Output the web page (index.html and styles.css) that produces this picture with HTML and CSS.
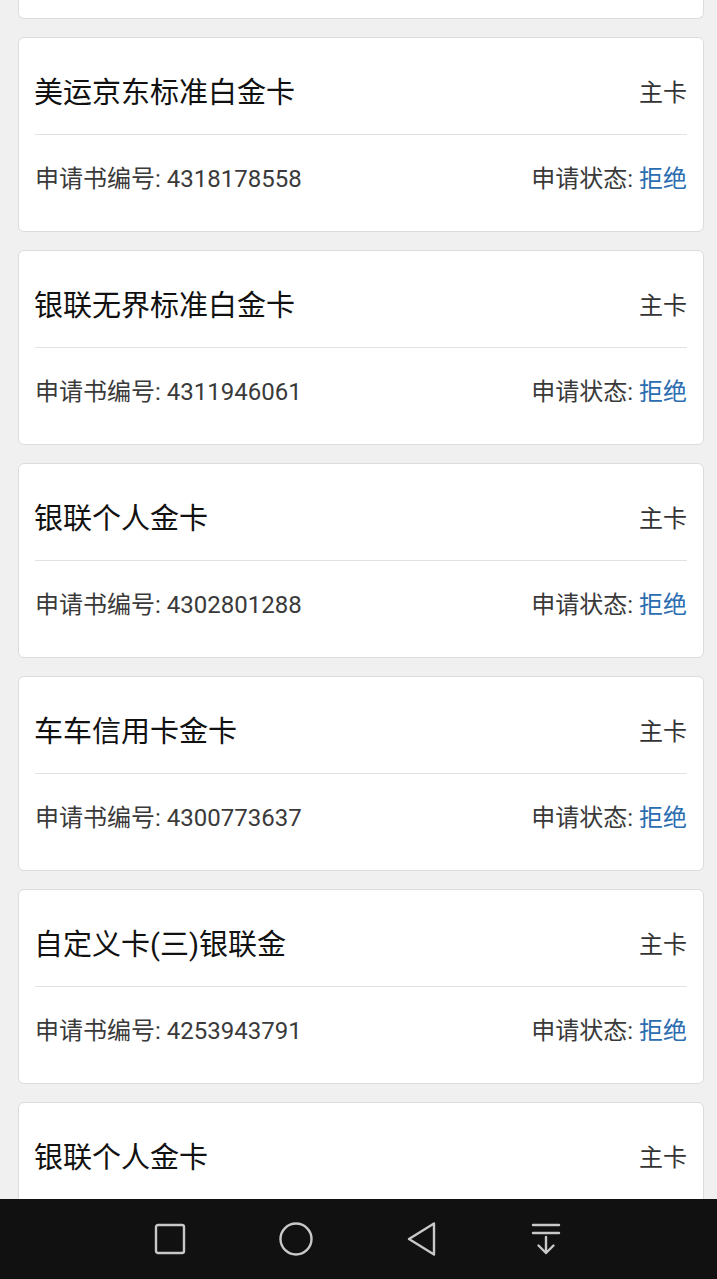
FILE: index.html
```html
<!DOCTYPE html>
<html lang="zh-CN">
<head>
<meta charset="utf-8">
<title>申请记录</title>
<link rel="stylesheet" href="styles.css">
</head>
<body>
<main class="list">
  <section class="card card-tail"></section>
  <section class="card">
    <div class="head"><span class="name">美运京东标准白金卡</span><span class="type">主卡</span></div>
    <div class="info"><span>申请书编号: 4318178558</span><span>申请状态: <em class="status">拒绝</em></span></div>
  </section>
  <section class="card">
    <div class="head"><span class="name">银联无界标准白金卡</span><span class="type">主卡</span></div>
    <div class="info"><span>申请书编号: 4311946061</span><span>申请状态: <em class="status">拒绝</em></span></div>
  </section>
  <section class="card">
    <div class="head"><span class="name">银联个人金卡</span><span class="type">主卡</span></div>
    <div class="info"><span>申请书编号: 4302801288</span><span>申请状态: <em class="status">拒绝</em></span></div>
  </section>
  <section class="card">
    <div class="head"><span class="name">车车信用卡金卡</span><span class="type">主卡</span></div>
    <div class="info"><span>申请书编号: 4300773637</span><span>申请状态: <em class="status">拒绝</em></span></div>
  </section>
  <section class="card">
    <div class="head"><span class="name">自定义卡(三)银联金</span><span class="type">主卡</span></div>
    <div class="info"><span>申请书编号: 4253943791</span><span>申请状态: <em class="status">拒绝</em></span></div>
  </section>
  <section class="card">
    <div class="head"><span class="name">银联个人金卡</span><span class="type">主卡</span></div>
  </section>
</main>
<nav class="navbar">
  <svg class="nav-icon" viewBox="0 0 32 32" width="32" height="32"><rect x="2" y="2" width="28" height="28" rx="2" fill="none" stroke="#c8c8c8" stroke-width="2.4"/></svg>
  <svg class="nav-icon" viewBox="0 0 36 36" width="36" height="36"><circle cx="18" cy="18" r="15.5" fill="none" stroke="#c8c8c8" stroke-width="2.4"/></svg>
  <svg class="nav-icon" viewBox="0 0 32 36" width="32" height="36"><path d="M28 2.5 L3 18 L28 33.5 Z" fill="none" stroke="#c8c8c8" stroke-width="2.4" stroke-linejoin="round"/></svg>
  <svg class="nav-icon" viewBox="0 0 32 34" width="32" height="34"><path d="M3 3 H29 M3 11 H29 M16 15 V31 M8.5 23.5 L16 31 L23.5 23.5" fill="none" stroke="#c8c8c8" stroke-width="2.4" stroke-linecap="round" stroke-linejoin="round"/></svg>
</nav>
</body>
</html>
```
FILE: styles.css
```css
* { box-sizing: border-box; }
html, body {
  margin: 0;
  padding: 0;
  background: #f0f0f0;
  overflow: hidden;
}
body {
  font-family: Roboto, "Noto Sans CJK SC", sans-serif;
  height: 1279px;
}
.list {
  display: flex;
  flex-direction: column;
  gap: 18px;
  padding: 0 13px 0 18px;
}
.card {
  background: #fff;
  border: 1px solid #dcdcdc;
  border-radius: 6px;
  padding: 0 16px;
  height: 195px;
}
.card-tail {
  height: 19px;
  border-top: none;
  border-radius: 0 0 6px 6px;
}
.head {
  display: flex;
  justify-content: space-between;
  align-items: center;
  height: 97px;
  padding-top: 7px;
  border-bottom: 1px solid #e2e2e2;
}
.name {
  font-size: 29px;
  color: #111;
  margin-left: -1px;
}
.type {
  font-size: 24px;
  color: #333;
  padding-top: 2px;
}
.info {
  display: flex;
  justify-content: space-between;
  align-items: center;
  height: 96px;
  padding-bottom: 14px;
  font-size: 24px;
  color: #3a3a3a;
}
.status {
  font-style: normal;
  color: #2a6db0;
}
.navbar {
  position: fixed;
  left: 0;
  right: 0;
  bottom: 0;
  height: 80px;
  background: #111;
  display: flex;
  align-items: center;
  justify-content: center;
  gap: 92px;
  padding-right: 1px;
}
.nav-icon { display: block; }
```
